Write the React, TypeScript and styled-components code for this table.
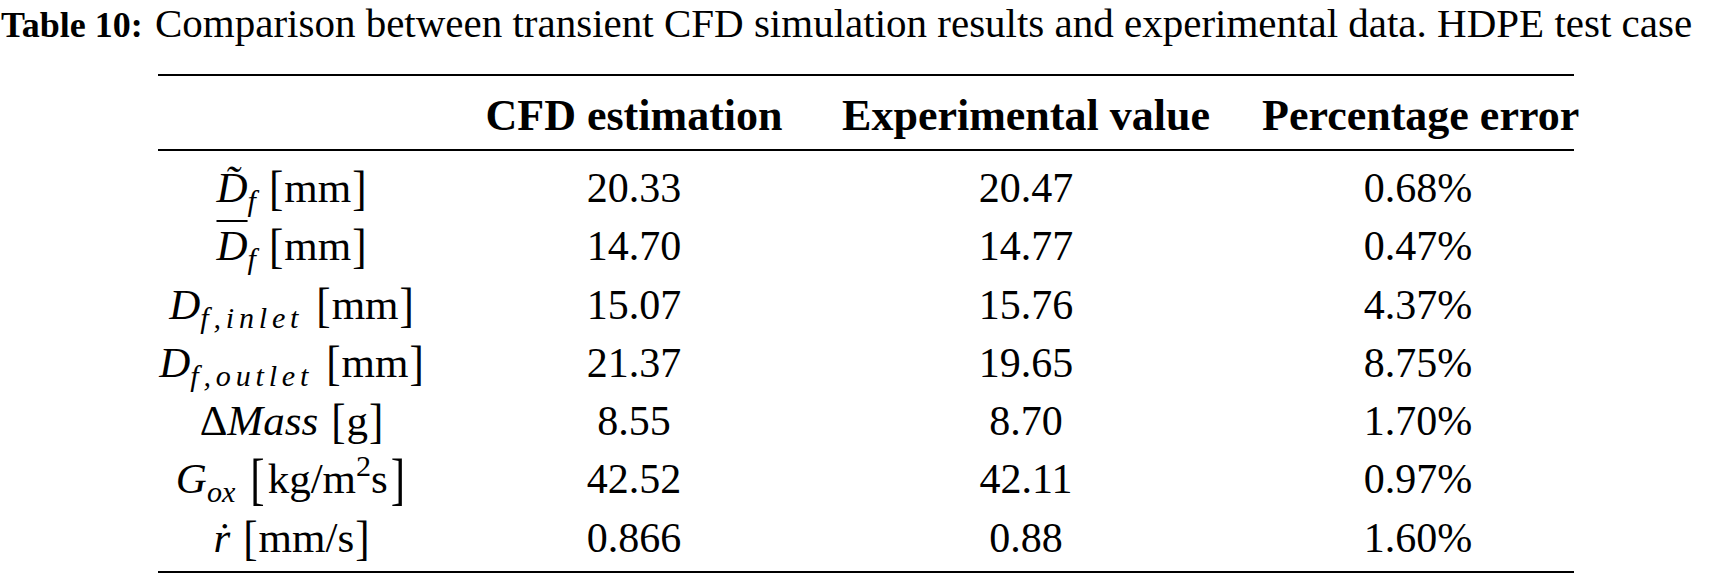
import styled, { createGlobalStyle } from "styled-components"

const rows = [
  { key: "dtilde", cfd: "20.33", exp: "20.47", err: "0.68%" },
  { key: "dbar", cfd: "14.70", exp: "14.77", err: "0.47%" },
  { key: "inlet", cfd: "15.07", exp: "15.76", err: "4.37%" },
  { key: "outlet", cfd: "21.37", exp: "19.65", err: "8.75%" },
  { key: "mass", cfd: "8.55", exp: "8.70", err: "1.70%" },
  { key: "gox", cfd: "42.52", exp: "42.11", err: "0.97%" },
  { key: "rdot", cfd: "0.866", exp: "0.88", err: "1.60%" },
]

const Label = ({ id }: { id: string }) => {
  switch (id) {
    case "dtilde":
      return <><Var>D&#x0303;</Var><Sub>f</Sub><Unit><Br>[</Br>mm<Br>]</Br></Unit></>
    case "dbar":
      return <><Var><Bar>D</Bar></Var><Sub>f</Sub><Unit><Br>[</Br>mm<Br>]</Br></Unit></>
    case "inlet":
      return <><Var>D</Var><Sub $spread>f,inlet</Sub><Unit><Br>[</Br>mm<Br>]</Br></Unit></>
    case "outlet":
      return <><Var>D</Var><Sub $spread>f,outlet</Sub><Unit><Br>[</Br>mm<Br>]</Br></Unit></>
    case "mass":
      return <>Δ<Var>Mass</Var><Unit><Br>[</Br>g<Br>]</Br></Unit></>
    case "gox":
      return <><Var>G</Var><Sub>ox</Sub><Unit><Br $big>[</Br>kg/m<Sup>2</Sup>s<Br $big>]</Br></Unit></>
    default:
      return <><Var>ṙ</Var><Unit><Br>[</Br>mm/s<Br>]</Br></Unit></>
  }
}

const App = () => {
  return (
    <Page>
      <GlobalStyle />
      <Caption>
        <strong>Table 10:</strong> Comparison between transient CFD simulation results and experimental data. HDPE test case
      </Caption>

      <Table>
        <Rule />
        <HeadCell />
        <HeadCell>CFD estimation</HeadCell>
        <HeadCell>Experimental value</HeadCell>
        <HeadCell>Percentage error</HeadCell>
        <Rule />
        <Body>
          {rows.map(r => (
            <Row key={r.key}>
              <LabelCell><Label id={r.key} /></LabelCell>
              <Cell>{r.cfd}</Cell>
              <Cell>{r.exp}</Cell>
              <Cell>{r.err}</Cell>
            </Row>
          ))}
        </Body>
        <Rule />
      </Table>
    </Page>
  )
}

const GlobalStyle = createGlobalStyle`
  body {
    margin: 0;
    background: #fff;
  }
`

const Page = styled.div`
  width: 1736px;
  height: 574px;
  overflow: hidden;
  font-family: "Liberation Serif", "Times New Roman", serif;
  color: #000;
`

const Caption = styled.div`
  font-size: 41px;
  line-height: 46px;
  padding-left: 1px;
  white-space: nowrap;

  strong {
    font-size: 36px;
    margin-right: 2px;
  }
`

const Table = styled.div`
  display: grid;
  grid-template-columns: 268px 312px 368px 312px;
  column-gap: 52px;
  width: 1416px;
  margin: 26px 0 0 158px;
`

const Rule = styled.div`
  grid-column: 1 / -1;
  height: 2px;
  background: #000;
`

const HeadCell = styled.div`
  font-weight: bold;
  font-size: 44px;
  line-height: 66px;
  padding-top: 7px;
  text-align: center;
  white-space: nowrap;
`

const Body = styled.div`
  grid-column: 1 / -1;
  display: grid;
  grid-template-columns: subgrid;
  padding: 8px 0 4px;
`

const Row = styled.div`
  grid-column: 1 / -1;
  display: grid;
  grid-template-columns: subgrid;
  height: 58.3px;
`

const Cell = styled.div`
  font-size: 42px;
  line-height: 58.3px;
  text-align: center;
  white-space: nowrap;
`

const LabelCell = styled(Cell)`
  font-size: 43px;
`

const Var = styled.i`
  font-style: italic;
`

const Bar = styled.span`
  text-decoration: overline;
  text-decoration-thickness: 2px;
`

const Sub = styled.sub<{ $spread?: boolean }>`
  font-size: 0.7em;
  font-style: italic;
  vertical-align: -0.3em;
  line-height: 0;
  letter-spacing: ${p => (p.$spread ? "0.16em" : "0")};
`

const Sup = styled.sup`
  font-size: 0.7em;
  vertical-align: 0.55em;
  line-height: 0;
`

const Unit = styled.span`
  margin-left: 12px;
`

const Br = styled.span<{ $big?: boolean }>`
  display: inline-block;
  line-height: 0;
  transform: ${p => (p.$big ? "scaleY(1.35)" : "scaleY(1.12)")};
  margin: 0 ${p => (p.$big ? "3px" : "1px")};
`

export default App
